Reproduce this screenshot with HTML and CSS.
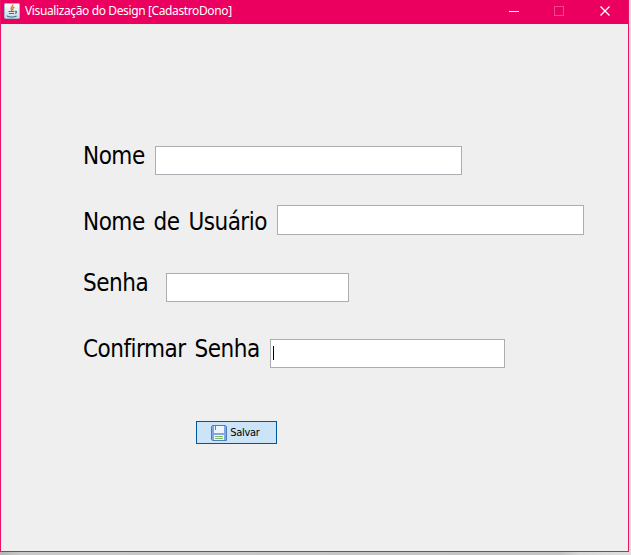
FILE: index.html
```html
<!DOCTYPE html>
<html lang="pt-BR">
<head>
<meta charset="utf-8">
<title>Visualização do Design [CadastroDono]</title>
<link rel="stylesheet" href="styles.css">
</head>
<body>
<main class="window">
  <header class="titlebar">
    <svg class="app-icon" width="16" height="16" viewBox="0 0 16 16">
      <defs><linearGradient id="tile" x2="0" y2="1"><stop stop-color="#fff"/><stop offset="1" stop-color="#c4d8e4"/></linearGradient></defs>
      <rect x=".5" y=".5" width="15" height="15" rx="1" fill="url(#tile)" stroke="#a4b7c4"/>
      <path d="M8.8 1.5C9.5 3.5 5.5 4 7.8 7.7M10.4 3.8C8 5 9.2 5.8 8.7 7.4" fill="none" stroke="#e8701a" stroke-width="1.3"/>
      <path d="M4.5 8.5H10.4M5 10.5H10M11 8.3C13.5 8 12.5 10.2 11 10.5M3.4 12.5C2.5 14.2 10 14.5 12.6 13" fill="none" stroke="#3f6e90" stroke-width="1.1"/>
    </svg>
    <h1 class="title">Visualização do Design [CadastroDono]</h1>
    <svg class="controls" width="102" height="12" viewBox="0 0 102 12">
      <path d="M0 6.5H10" stroke="#fff"/>
      <rect x="45.5" y="1.5" width="9" height="9" fill="none" stroke="#f2458d"/>
      <path d="M91.5 1.5L100.5 10.5M100.5 1.5L91.5 10.5" stroke="#fff" stroke-width="1.3"/>
    </svg>
  </header>
  <form class="form">
    <div class="row row-name"><label class="label" for="nome"><span>Nome</span></label><input class="field" id="nome"></div>
    <div class="row row-user"><label class="label" for="usuario"><span>Nome de Usuário</span></label><input class="field" id="usuario"></div>
    <div class="row row-pass"><label class="label" for="senha"><span>Senha</span></label><input class="field" id="senha"></div>
    <div class="row row-confirm"><label class="label"><span>Confirmar Senha</span></label><div class="field"><i class="caret"></i></div></div>
    <button class="save" type="button">
      <svg width="16" height="16" viewBox="0 0 16 16">
        <path d="M1.5 .5H14.5L15.5 1.5V15.5H1.5L.5 14.5V1.5Z" fill="#7fa6e0" stroke="#4f7cc2"/>
        <rect x="3" y="1" width="10" height="7" fill="#edf4fc"/>
        <path d="M4 1H5V5H4Z" fill="#5a84c4"/>
        <rect x="3" y="10" width="10" height="5" fill="#f4faf0"/>
        <path d="M4 11.5H12M4 13.5H12" stroke="#7dbd62"/>
      </svg>
      <span>Salvar</span>
    </button>
  </form>
</main>
</body>
</html>
```
FILE: styles.css
```css
* { box-sizing: border-box; }
body {
  margin: 0;
  height: 555px;
  overflow: hidden;
  background: linear-gradient(to right, #b5b5b5, #c8c8c8 20px, #c4c4c4 560px, #d8d8d8 580px, #dedede);
}
.window {
  width: 629px;
  height: 552px;
  border: 1px solid #eb1369;
  border-top: 0;
  background: #efefef;
}
.titlebar {
  height: 24px;
  display: flex;
  align-items: center;
  padding: 0 17px 2px 3px;
  background: #ec005f;
}
.title {
  margin: 0 auto 0 5px;
  font: 12px/16px "Noto Sans", sans-serif;
  letter-spacing: -0.38px;
  color: #fff;
  white-space: nowrap;
}
.form {
  display: flex;
  flex-direction: column;
  align-items: flex-start;
  padding: 117px 0 0 82px;
}
.row { display: flex; align-items: flex-start; height: 34px; }
.label {
  padding-top: 1px;
  font: 24px/29px "DejaVu Sans Condensed", "DejaVu Sans", sans-serif;
  font-stretch: condensed;
  letter-spacing: -0.5px;
  word-spacing: 2.5px;
  color: #000;
  white-space: nowrap;
}
.field {
  height: 29px;
  margin: 5px 0 0;
  padding: 6px 2px;
  border: 1px solid #abadb3;
  border-radius: 0;
  background: #fff;
}
.row-name .label { width: 72px; }
.row-name .field { width: 307px; }
.row-user { margin-top: 30px; }
.row-user .label { width: 194px; padding-top: 3px; }
.row-user .field { width: 307px; height: 30px; margin-top: 0; }
.row-pass { margin-top: 29px; }
.row-pass .label { width: 83px; }
.row-pass .field { width: 183px; }
.row-confirm { margin-top: 32px; }
.row-confirm .label { width: 187px; }
.row-confirm .field { width: 235px; }
.caret { display: block; width: 1px; height: 14px; background: #000; }
.save {
  display: flex;
  align-items: center;
  justify-content: center;
  gap: 3px;
  width: 81px;
  height: 23px;
  margin: 53px 0 0 113px;
  padding: 0 2px 0 0;
  border: 1px solid #00559b;
  background: #cce4f7;
  color: #000;
  font: 11px/14px "DejaVu Sans Condensed", "DejaVu Sans", sans-serif;
  font-stretch: condensed;
  letter-spacing: -0.3px;
}
```
